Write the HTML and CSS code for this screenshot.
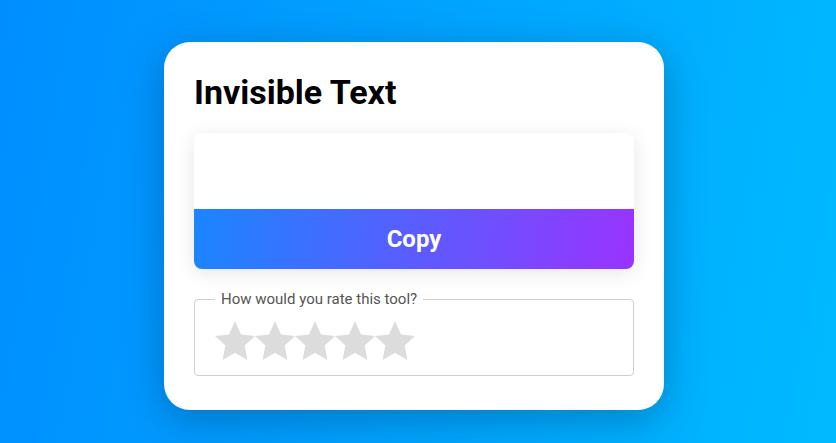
FILE: index.html
```html
<!DOCTYPE html>
<html lang="en">
<head>
    <meta charset="UTF-8">
    <meta name="viewport" content="width=device-width, initial-scale=1.0">
    <title>Invisible Text</title>
    <link rel="stylesheet" href="styles.css">
</head>
<body>
    <div class="card">
        <h1>Invisible Text</h1>

        <div class="output-box">
            <textarea id="outputText" readonly></textarea>
            <button class="copy-btn">Copy</button>
        </div>

        <fieldset class="rating">
            <legend>How would you rate this tool?</legend>
            <div class="stars">
                <svg class="star" viewBox="0 0 40 40"><polygon points="20,0 26,13.5 40,15 29.6,24.5 32.4,39 20,31.8 7.6,39 10.4,24.5 0,15 14,13.5"/></svg>
                <svg class="star" viewBox="0 0 40 40"><polygon points="20,0 26,13.5 40,15 29.6,24.5 32.4,39 20,31.8 7.6,39 10.4,24.5 0,15 14,13.5"/></svg>
                <svg class="star" viewBox="0 0 40 40"><polygon points="20,0 26,13.5 40,15 29.6,24.5 32.4,39 20,31.8 7.6,39 10.4,24.5 0,15 14,13.5"/></svg>
                <svg class="star" viewBox="0 0 40 40"><polygon points="20,0 26,13.5 40,15 29.6,24.5 32.4,39 20,31.8 7.6,39 10.4,24.5 0,15 14,13.5"/></svg>
                <svg class="star" viewBox="0 0 40 40"><polygon points="20,0 26,13.5 40,15 29.6,24.5 32.4,39 20,31.8 7.6,39 10.4,24.5 0,15 14,13.5"/></svg>
            </div>
        </fieldset>
    </div>
</body>
</html>
```

FILE: styles.css
```css
* {
    margin: 0;
    padding: 0;
    box-sizing: border-box;
    font-family: Roboto, sans-serif;
}

body {
    min-height: 100vh;
    background: linear-gradient(100deg, #008eff, #00baff);
    display: flex;
    justify-content: center;
    align-items: flex-start;
    padding: 42px 8px 0 0;
}

.card {
    width: 500px;
    background: #fff;
    border-radius: 26px;
    padding: 30px 30px 34px;
    box-shadow: 0 10px 40px rgba(0, 40, 90, 0.35);
}

h1 {
    font-size: 34px;
    font-weight: 700;
    color: #000;
    line-height: 40px;
    margin-bottom: 21px;
}

.output-box {
    border-radius: 8px;
    overflow: hidden;
    box-shadow: 0 4px 20px rgba(0, 0, 0, 0.1);
    display: flex;
    flex-direction: column;
}

.output-box textarea {
    height: 76px;
    border: none;
    resize: none;
    outline: none;
    padding: 12px 16px;
    font-size: 16px;
    background: #fff;
}

.copy-btn {
    height: 60px;
    border: none;
    background: linear-gradient(100deg, #1a86ff, #9a33ff);
    color: #fff;
    font-size: 24px;
    font-weight: 700;
    cursor: pointer;
}

.rating {
    margin-top: 21px;
    border: 1px solid #cfcfcf;
    border-radius: 4px;
    padding: 13px 20px 14px;
}

.rating legend {
    padding: 0 6px;
    font-size: 15px;
    color: #555;
}

.stars {
    display: flex;
}

.star {
    width: 40px;
    height: 40px;
    fill: #dcdcdc;
}
```
